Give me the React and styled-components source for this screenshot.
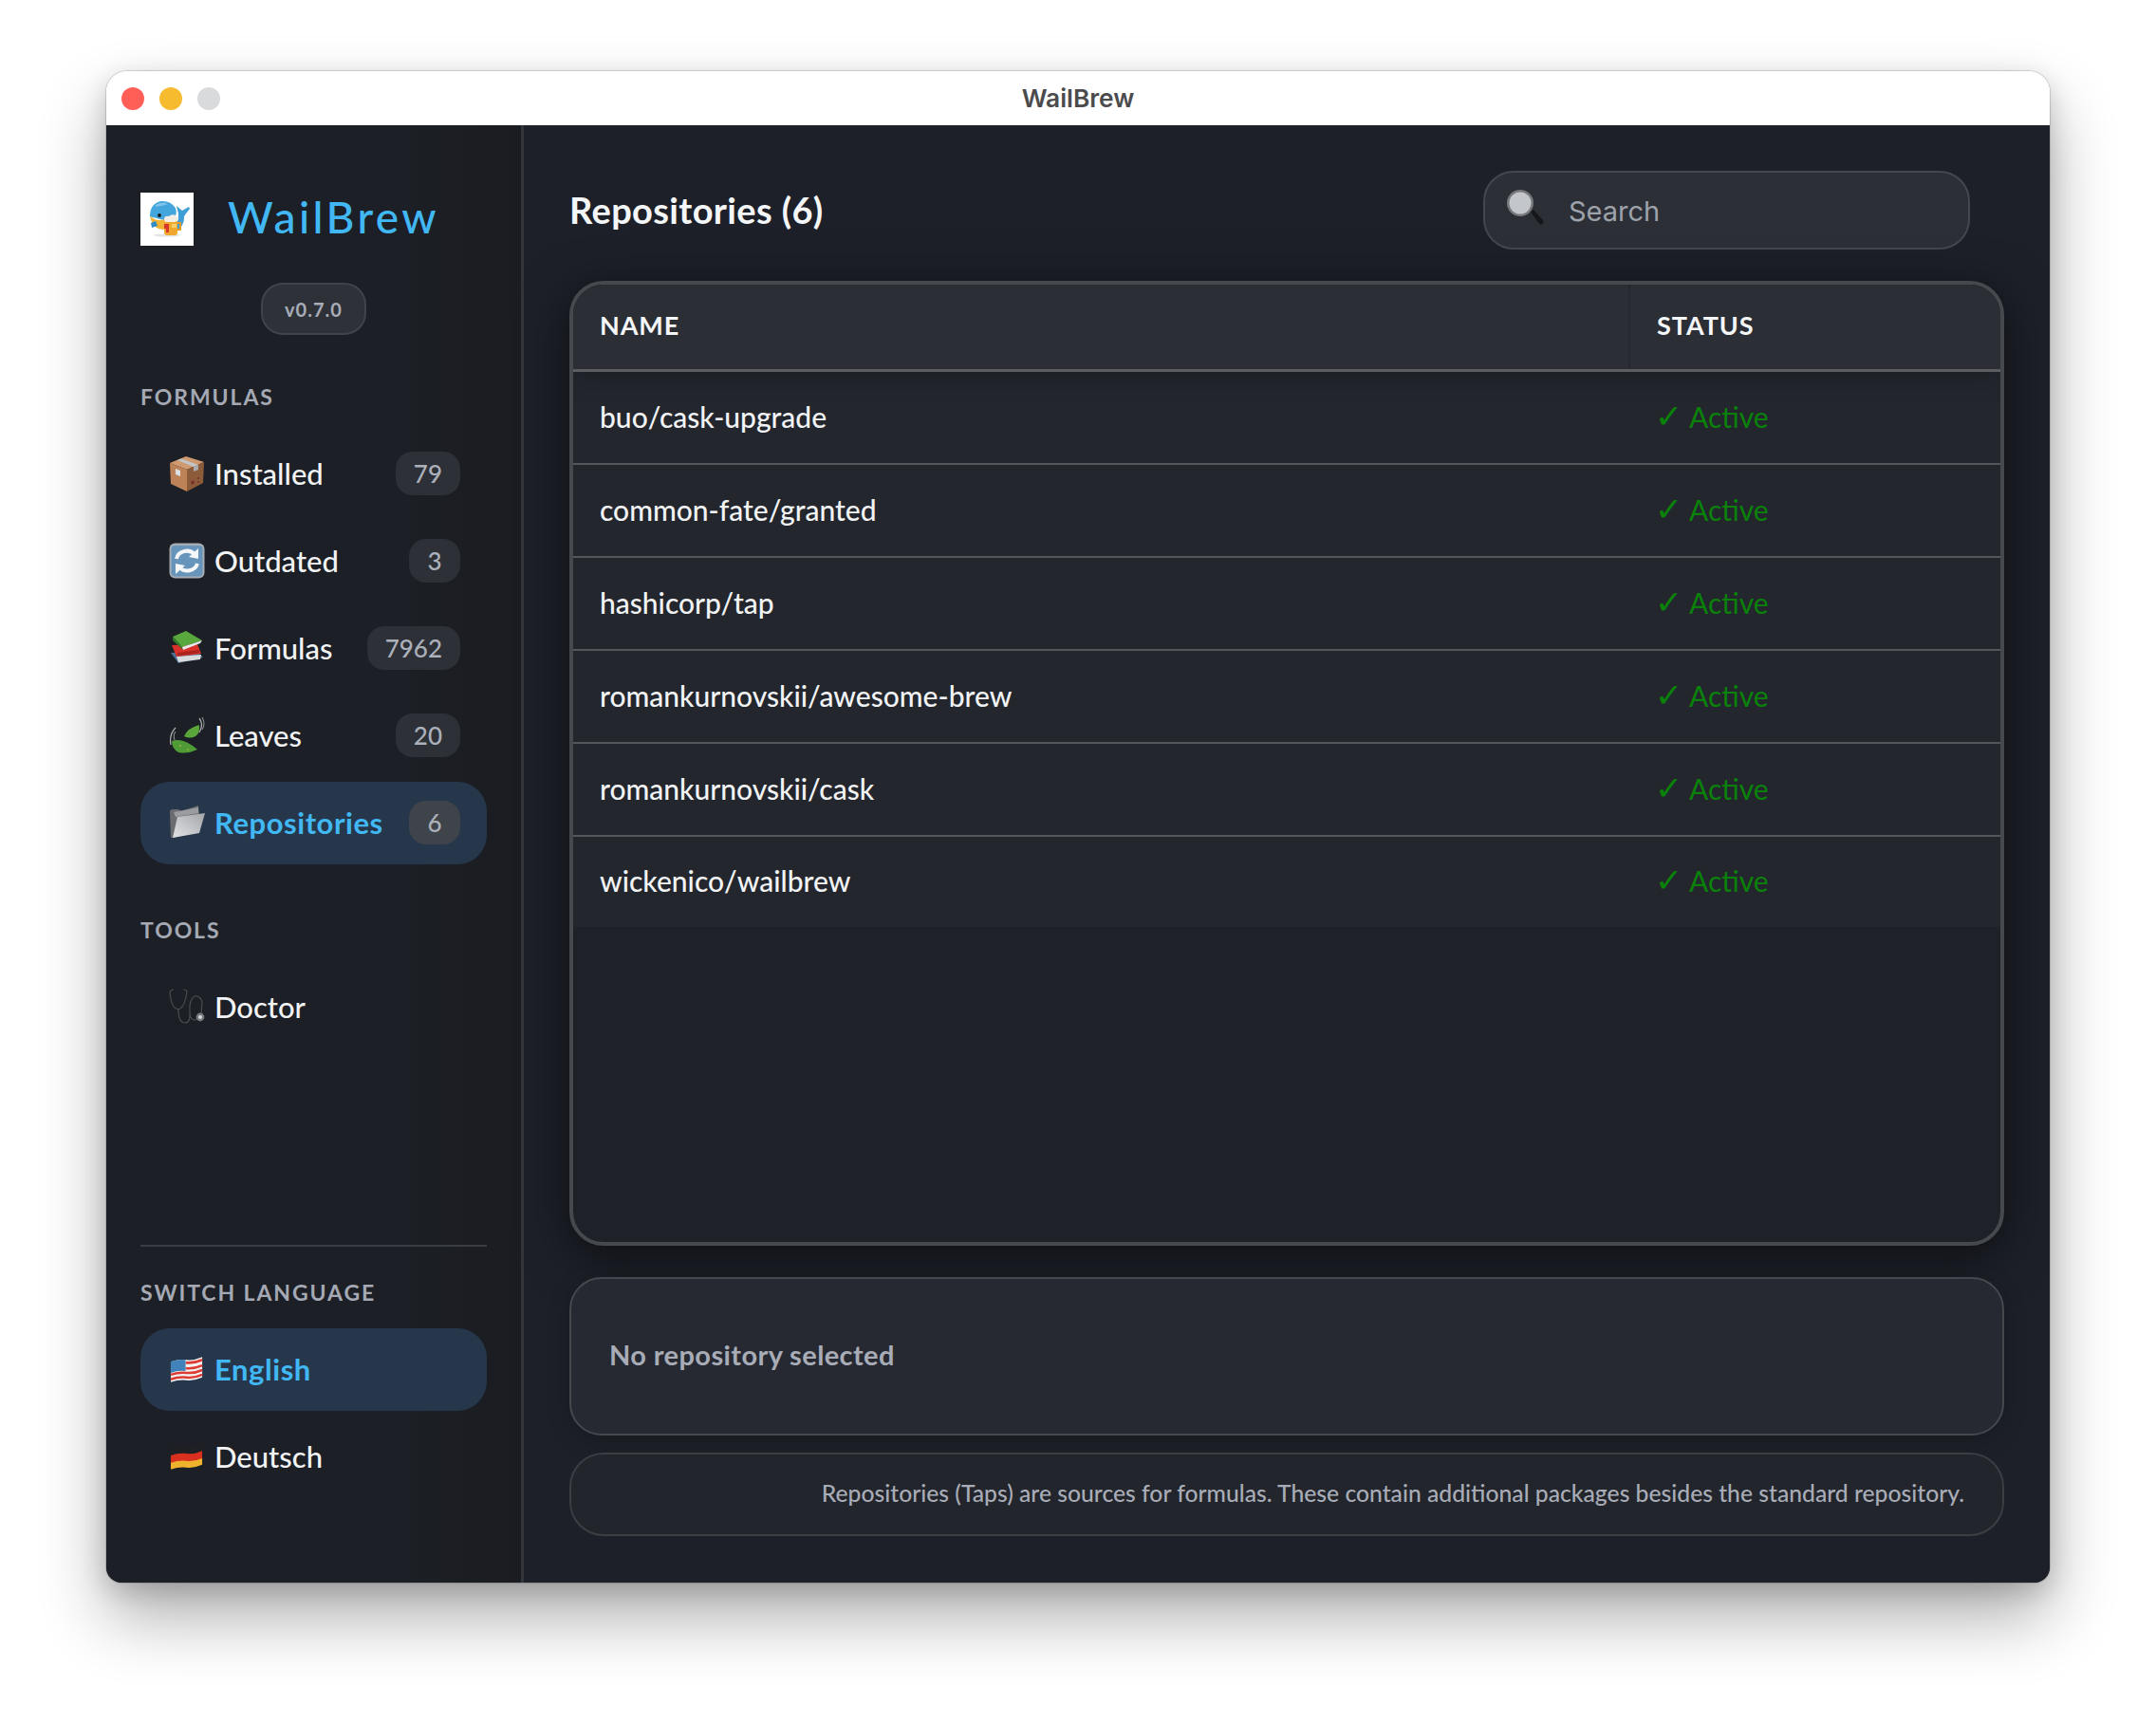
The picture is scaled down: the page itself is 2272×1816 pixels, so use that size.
import React from "react";
import styled, { createGlobalStyle } from "styled-components";

const GlobalStyle = createGlobalStyle`
  html, body {
    margin: 0;
    padding: 0;
    background: #ffffff;
  }
  * {
    box-sizing: border-box;
  }
  #root {
    width: 2272px;
    height: 1816px;
    overflow: hidden;
  }
`;

const FONT = `"Lato", "DejaVu Sans", sans-serif`;

const Page = styled.div`
  padding: 75px 112px 0;
  font-family: ${FONT};
`;

const Window = styled.div`
  width: 2048px;
  height: 1593px;
  display: flex;
  flex-direction: column;
  border-radius: 22px 22px 16px 16px;
  box-shadow: 0 0 0 1px rgba(0, 0, 0, 0.14), 0 8px 26px rgba(0, 0, 0, 0.16),
    0 36px 70px rgba(0, 0, 0, 0.32);
`;

const TitleBar = styled.div`
  height: 57px;
  flex: none;
  position: relative;
  display: flex;
  align-items: center;
  justify-content: center;
  background: #ffffff;
  border-radius: 22px 22px 0 0;
`;

const Lights = styled.div`
  position: absolute;
  left: 16px;
  top: 17px;
  display: flex;
  gap: 16px;
`;

const Light = styled.span`
  width: 24px;
  height: 24px;
  border-radius: 50%;
  background: ${(p) => p.color};
`;

const WindowTitle = styled.div`
  font-family: "Inter", sans-serif;
  font-weight: 600;
  font-size: 26.3px;
  color: #4b4b4d;
  padding-bottom: 1px;
`;

const Body = styled.div`
  flex: 1;
  min-height: 0;
  display: flex;
  overflow: hidden;
  border-radius: 0 0 16px 16px;
  background: #1d2028;
`;

const Sidebar = styled.aside`
  width: 440px;
  flex: none;
  display: flex;
  flex-direction: column;
  padding: 71px 36px 89px 36px;
  background: linear-gradient(90deg, #1c1f25 72%, #1a1c21);
  border-right: 3px solid #32353b;
`;

const Brand = styled.div`
  display: flex;
  align-items: center;
  gap: 36px;
`;

const LogoBox = styled.svg`
  width: 56px;
  height: 56px;
  flex: none;
  display: block;
`;

const BrandName = styled.div`
  margin-top: -5px;
  font-size: 46px;
  font-weight: 500;
  line-height: 50px;
  letter-spacing: 3.4px;
  color: #41b8f3;
`;

const Version = styled.div`
  align-self: center;
  margin-top: 39px;
  width: 111px;
  height: 55px;
  display: flex;
  align-items: center;
  justify-content: center;
  border-radius: 23px;
  background: #2e3137;
  border: 2px solid #40434a;
  color: #a7acb7;
  font-size: 20px;
  font-weight: 700;
  letter-spacing: 1px;
`;

const SectionLabel = styled.div`
  margin-top: ${(p) => p.$top}px;
  margin-bottom: 23px;
  height: 30px;
  line-height: 30px;
  font-size: 23px;
  font-weight: 700;
  letter-spacing: 1.9px;
  color: #a4a9b4;
`;

const NavList = styled.div`
  display: flex;
  flex-direction: column;
  gap: 5px;
`;

const NavItem = styled.div`
  height: 87px;
  display: flex;
  align-items: center;
  padding: 0 28px 2px 30px;
  border-radius: 31px;
  background: ${(p) => (p.$active ? "#27374b" : "transparent")};
  color: ${(p) => (p.$active ? "#41b8f3" : "#f2f3f5")};
  font-size: 31px;
  font-weight: ${(p) => (p.$active ? 700 : 500)};
  letter-spacing: ${(p) => (p.$active ? "0.55px" : "0")};
`;

const NavIcon = styled.svg`
  width: ${(p) => (p.$flag ? 37 : 38)}px;
  height: 38px;
  flex: none;
  margin-left: ${(p) => (p.$flag ? 1 : 0)}px;
  margin-right: 10px;
  display: block;
`;

const Count = styled.span`
  margin-left: auto;
  height: 46px;
  min-width: 54px;
  padding: 0 19px;
  display: flex;
  align-items: center;
  justify-content: center;
  border-radius: 18px;
  background: ${(p) => (p.$active ? "#3f444b" : "#2d3036")};
  color: #abb0ba;
  font-size: 26px;
  font-weight: 500;
  letter-spacing: 0;
`;

const SidebarFooter = styled.div`
  margin-top: auto;
  border-top: 2px solid #3a3d43;
`;

const Main = styled.main`
  flex: 1;
  min-width: 0;
  display: flex;
  flex-direction: column;
  padding: 48px 48px 49px 48px;
  background: #1d2028;
`;

const Header = styled.div`
  display: flex;
  align-items: center;
  justify-content: space-between;
  padding-right: 36px;
`;

const Heading = styled.h1`
  margin: -2px 0 0;
  font-size: 38px;
  font-weight: 700;
  letter-spacing: 0.35px;
  color: #f5f6f8;
`;

const SearchBox = styled.div`
  width: 513px;
  height: 83px;
  display: flex;
  align-items: center;
  padding: 0 22px;
  gap: 25px;
  border-radius: 32px;
  background: #2c2f36;
  border: 2px solid #44474d;
`;

const SearchIcon = styled.svg`
  width: 41px;
  height: 41px;
  flex: none;
  margin-top: -5px;
  display: block;
`;

const SearchText = styled.span`
  margin-top: 2px;
  font-family: "Inter", sans-serif;
  font-size: 29px;
  color: #9ea2aa;
`;

const TableWrap = styled.div`
  flex: 1;
  min-height: 0;
  margin-top: 33px;
  border: 4px solid #46494e;
  border-radius: 36px;
  background: #1e2128;
  overflow: hidden;
  box-shadow: 0 10px 50px rgba(0, 0, 0, 0.55);
`;

const TableRow = styled.div`
  display: grid;
  grid-template-columns: 1112px 1fr;
  align-items: center;
  height: 98px;
  background: #23262d;
  border-bottom: 2px solid #55575c;
  &:last-child {
    border-bottom: none;
    height: 95px;
  }
`;

const HeadRow = styled.div`
  position: relative;
  display: grid;
  grid-template-columns: 1112px 1fr;
  height: 92px;
  background: #2b2e35;
  border-bottom: 3px solid #5b5d61;
  box-shadow: 0 6px 24px rgba(0, 0, 0, 0.2);
`;

const HeadCell = styled.div`
  display: flex;
  align-items: center;
  padding-left: 28px;
  padding-bottom: 5px;
  border-left: ${(p) => (p.$status ? "2px solid #25282e" : "none")};
  font-size: 27px;
  font-weight: 700;
  letter-spacing: 0.9px;
  color: #f5f6f8;
`;

const NameCell = styled.div`
  padding: 0 0 3px 28px;
  font-size: 30px;
  font-weight: 500;
  color: #f2f3f5;
`;

const StatusCell = styled.div`
  padding: 0 0 4px 28px;
  font-size: 30px;
  font-weight: 400;
  color: #0a820a;
`;

const CheckMark = styled.span`
  font-size: 35px;
  line-height: 1;
  font-weight: 400;
`;

const DetailPanel = styled.div`
  margin-top: 33px;
  height: 167px;
  flex: none;
  display: flex;
  align-items: center;
  padding: 0 0 4px 40px;
  border-radius: 34px;
  background: #262931;
  border: 2px solid #45484d;
  color: #a8acb7;
  font-size: 29px;
  font-weight: 700;
  letter-spacing: 0.4px;
  box-shadow: 0 4px 24px rgba(0, 0, 0, 0.2);
`;

const InfoPanel = styled.div`
  margin-top: 18px;
  height: 88px;
  flex: none;
  display: flex;
  align-items: center;
  justify-content: flex-end;
  padding: 0 40px 4px 0;
  border-radius: 36px;
  background: #22252b;
  border: 2px solid #3b3e43;
  color: #a8acb7;
  font-size: 24.7px;
  font-weight: 500;
`;

function WhaleLogo() {
  return (
    <LogoBox viewBox="0 0 56 56">
      <rect width="56" height="56" fill="#ffffff" />
      <ellipse cx="28" cy="45" rx="14" ry="1.6" fill="#e4e4e4" />
      <path d="M38 14 L44 19 L51 15 L52 17 L48 22 L46 25 Q47 36 35 43 L33 39 Q41 33 40 22 Z" fill="#3d9fd6" />
      <path d="M10 24 Q18 34 32 24 Q36 38 24 39 Q12 38 10 24Z" fill="#f2b434" />
      <path d="M10 25 Q10 12 21 9 Q31 8 36 15 Q39 19 37 24 Q26 31 17 27 Q12 26 10 25Z" fill="#45a6dd" />
      <path d="M16 13 Q22 9 29 12 Q24 14 16 15Z" fill="#7fc4ea" />
      <path d="M11 32 L16 30 L18 35 L12 37Z" fill="#2f8cc4" />
      <circle cx="20" cy="24" r="1.9" fill="#1a1a1a" />
      <path d="M25 29 H39 V42 Q39 45 36 45 H28 Q25 45 25 42Z" fill="#f0a92e" />
      <path d="M39 31 H43 V40 H39 V38 H41 V33 H39Z" fill="#e89a26" />
      <path d="M25 33 H30 V42 H27 V38 H25Z" fill="#d8362a" />
      <path d="M33 33 H38 V37 H33Z" fill="#f6cf6b" />
      <path d="M25 27 Q26 24 30 25 Q33 22 37 24 Q41 26 39 30 L36 31 H27 Q25 31 25 27Z" fill="#f4efe6" />
    </LogoBox>
  );
}

function BoxIcon() {
  return (
    <NavIcon viewBox="0 0 38 38">
      <path d="M1 8 L18 1 L37 7 L19 15Z" fill="#cf9a6f" />
      <path d="M1 8 L19 15 L19 38 L2 30Z" fill="#bd8257" />
      <path d="M19 15 L37 7 L36 29 L19 38Z" fill="#8c5c3a" />
      <path d="M9 5 L13 3.4 L31 10 L26 12Z" fill="#c2c4c6" />
      <path d="M26 12 L31 10 L31 15 L26 17Z" fill="#a9abad" />
      <path d="M7 14 L12 16 L12 22 L7 20Z" fill="#dde0e3" />
      <path d="M23 28 L26 26 L27 29 L24 31Z" fill="#7a2c2c" />
      <circle cx="31" cy="24" r="0.9" fill="#7a2c2c" />
      <circle cx="31" cy="28" r="0.9" fill="#7a2c2c" />
    </NavIcon>
  );
}

function RefreshIcon() {
  return (
    <NavIcon viewBox="0 0 38 38">
      <rect x="0.5" y="0.5" width="37" height="37" rx="6" fill="#a6adb3" />
      <rect x="2.5" y="3" width="33" height="32.5" rx="4" fill="#6694bb" />
      <path d="M8 17 A11 10 0 0 1 27 12" fill="none" stroke="#f4f6f8" strokeWidth="4" />
      <path d="M31 6 L31 17 L21 15Z" fill="#f4f6f8" />
      <path d="M30 22 A11 10 0 0 1 11 26" fill="none" stroke="#f4f6f8" strokeWidth="4" />
      <path d="M7 33 L7 22 L17 24Z" fill="#f4f6f8" />
    </NavIcon>
  );
}

function BooksIcon() {
  return (
    <NavIcon viewBox="0 0 38 38">
      <path d="M2 24 L30 23 L36 29 L10 35Z" fill="#4a6f92" />
      <path d="M8 28 L34 26 L33 31 L10 34Z" fill="#d9dcdf" />
      <path d="M3 16 L30 15 L34 25 L8 28Z" fill="#d8312a" />
      <path d="M9 24 L32 21 L32 24 L9 27Z" fill="#a9231f" />
      <path d="M4 7 L18 1 L35 11 L14 18Z" fill="#58a83d" />
      <path d="M4 7 L14 18 L15 21 L4 11Z" fill="#2f7d2a" />
      <path d="M14 18 L35 11 L33 14 L15 21Z" fill="#e6e8ea" />
    </NavIcon>
  );
}

function LeavesIcon() {
  return (
    <NavIcon viewBox="0 0 38 38">
      <path d="M16 20 Q20 11 32 8 Q33 17 28 20 Q22 23 16 20Z" fill="#5ba63a" />
      <path d="M32 1 Q37 8 32 16" fill="none" stroke="#a8abac" strokeWidth="1.3" />
      <path d="M35 0 Q39 7 35 13" fill="none" stroke="#8a8d8e" strokeWidth="1.1" />
      <path d="M3 25 Q15 21 30 34 Q20 39 10 37 Q3 33 3 25Z" fill="#4f9c37" />
      <path d="M7 11 Q0 18 2 29" fill="none" stroke="#a8abac" strokeWidth="1.3" />
      <path d="M7 15 Q4 19 6 24" fill="none" stroke="#8a8d8e" strokeWidth="1.1" />
      <circle cx="12" cy="30" r="0.8" fill="#d8c24a" />
      <circle cx="20" cy="34" r="0.8" fill="#d8c24a" />
    </NavIcon>
  );
}

function FolderIcon() {
  return (
    <NavIcon viewBox="0 0 38 38">
      <defs>
        <linearGradient id="folderFront" x1="0" y1="1" x2="1" y2="0">
          <stop offset="0" stopColor="#e2e3e5" />
          <stop offset="1" stopColor="#a2a4a8" />
        </linearGradient>
      </defs>
      <path d="M1 8 Q1 5 4 5 L10 5 L13 7 L31 1 L32 10 L6 35 L2 35Z" fill="#6a6c70" />
      <path d="M5 8 L31 3 L31 9 L7 13Z" fill="#9a9c9f" />
      <path d="M9 13 L38 9 L32 30 L4 35Z" fill="url(#folderFront)" />
    </NavIcon>
  );
}

function StethoscopeIcon() {
  return (
    <NavIcon viewBox="0 0 38 38">
      <g fill="none" stroke="#4a4d52" strokeWidth="1.2">
        <path d="M5 1 Q1 1 1 5 Q2 14 5 19 Q8 23 12 21 Q17 18 19 3 Q19 1 15 1" />
        <path d="M10 22 Q10 36 17 36 Q23 36 22 24 Q21 12 27 8 Q33 7 35 14 L34 27" />
        <path d="M22 28 Q24 35 30 32" />
      </g>
      <circle cx="33" cy="30" r="4.4" fill="#75787c" />
      <circle cx="33" cy="30" r="2" fill="#d7d9db" />
    </NavIcon>
  );
}

function UsFlagIcon() {
  return (
    <NavIcon $flag viewBox="0 0 38 38">
      <path d="M1 11 Q10 8 18 9 Q26 10 35 6 L35 28 Q26 32 18 31 Q10 30 1 33Z" fill="#f3f3f3" />
      <g fill="none" stroke="#dd3c33" strokeWidth="2.6">
        <path d="M17 12 Q26 13 35 9" />
        <path d="M17 18 Q26 19 35 15" />
        <path d="M1 25 Q10 22 18 23 Q26 24 35 20" />
        <path d="M1 30 Q10 27 18 28 Q26 29 35 25" />
      </g>
      <path d="M1 11 Q9 8 17 9 L17 21 Q9 20 1 23Z" fill="#3f83ba" />
    </NavIcon>
  );
}

function DeFlagIcon() {
  return (
    <NavIcon $flag viewBox="0 0 38 38">
      <path d="M1 11 Q10 8 18 9 Q26 10 35 6 L35 14 Q26 18 18 17 Q10 16 1 19Z" fill="#1f2023" />
      <path d="M1 18 Q10 15 18 16 Q26 17 35 13 L35 22 Q26 26 18 25 Q10 24 1 27Z" fill="#d9301f" />
      <path d="M1 26 Q10 23 18 24 Q26 25 35 21 L35 28 Q26 32 18 31 Q10 30 1 33Z" fill="#eeb22c" />
    </NavIcon>
  );
}

function MagnifierIcon() {
  return (
    <SearchIcon viewBox="0 0 41 41">
      <path d="M26 24 L29 22 L39 33 Q40 36 37 38 L35 37Z" fill="#15171a" />
      <circle cx="15" cy="15" r="14" fill="#77797d" />
      <circle cx="15" cy="15" r="11.5" fill="#c3c6ca" />
    </SearchIcon>
  );
}

const REPOS = [
  "buo/cask-upgrade",
  "common-fate/granted",
  "hashicorp/tap",
  "romankurnovskii/awesome-brew",
  "romankurnovskii/cask",
  "wickenico/wailbrew",
];

const FORMULA_ITEMS = [
  { label: "Installed", count: 79, icon: <BoxIcon /> },
  { label: "Outdated", count: 3, icon: <RefreshIcon /> },
  { label: "Formulas", count: 7962, icon: <BooksIcon /> },
  { label: "Leaves", count: 20, icon: <LeavesIcon /> },
  { label: "Repositories", count: 6, icon: <FolderIcon />, active: true },
];

export default function App() {
  return (
    <Page>
      <GlobalStyle />
      <Window>
        <TitleBar>
          <Lights>
            <Light color="#ff5f57" />
            <Light color="#f6bb2e" />
            <Light color="#d9dadc" />
          </Lights>
          <WindowTitle>WailBrew</WindowTitle>
        </TitleBar>
        <Body>
          <Sidebar>
            <Brand>
              <WhaleLogo />
              <BrandName>WailBrew</BrandName>
            </Brand>
            <Version>v0.7.0</Version>

            <SectionLabel $top={50}>FORMULAS</SectionLabel>
            <NavList>
              {FORMULA_ITEMS.map((item) => (
                <NavItem key={item.label} $active={item.active}>
                  {item.icon}
                  {item.label}
                  <Count $active={item.active}>{item.count}</Count>
                </NavItem>
              ))}
            </NavList>

            <SectionLabel $top={54}>TOOLS</SectionLabel>
            <NavList>
              <NavItem>
                <StethoscopeIcon />
                Doctor
              </NavItem>
            </NavList>

            <SidebarFooter>
              <SectionLabel $top={33}>SWITCH LANGUAGE</SectionLabel>
              <NavList>
                <NavItem $active>
                  <UsFlagIcon />
                  English
                </NavItem>
                <NavItem>
                  <DeFlagIcon />
                  Deutsch
                </NavItem>
              </NavList>
            </SidebarFooter>
          </Sidebar>

          <Main>
            <Header>
              <Heading>Repositories (6)</Heading>
              <SearchBox>
                <MagnifierIcon />
                <SearchText>Search</SearchText>
              </SearchBox>
            </Header>

            <TableWrap>
              <HeadRow>
                <HeadCell>NAME</HeadCell>
                <HeadCell $status>STATUS</HeadCell>
              </HeadRow>
              {REPOS.map((repo) => (
                <TableRow key={repo}>
                  <NameCell>{repo}</NameCell>
                  <StatusCell>
                    <CheckMark>✓</CheckMark> Active
                  </StatusCell>
                </TableRow>
              ))}
            </TableWrap>

            <DetailPanel>No repository selected</DetailPanel>
            <InfoPanel>
              Repositories (Taps) are sources for formulas. These contain additional packages besides the standard repository.
            </InfoPanel>
          </Main>
        </Body>
      </Window>
    </Page>
  );
}
